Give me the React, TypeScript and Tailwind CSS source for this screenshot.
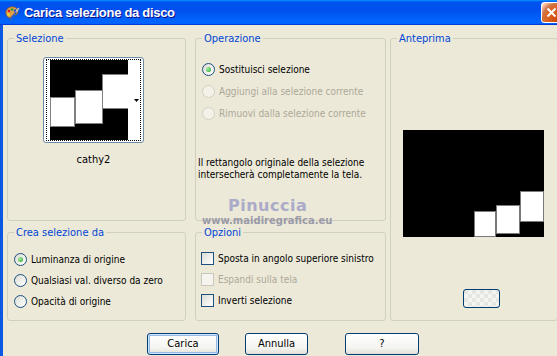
import React from "react";

const font = "font-['DejaVu_Sans_Condensed','Liberation_Sans',sans-serif]";

const Radio = ({
  label,
  checked = false,
  disabled = false,
  h = "h-[21px]",
}: {
  label: string;
  checked?: boolean;
  disabled?: boolean;
  h?: string;
}) => (
  <div className={`flex items-center whitespace-nowrap ${h}`}>
    <span
      className={`flex h-[13px] w-[13px] shrink-0 items-center justify-center rounded-full border ${
        disabled
          ? "border-[#D3D0C2] bg-[#F3F1E8]"
          : "border-[#1C5180] bg-[linear-gradient(135deg,#DCDCD5,#FFFFFF)]"
      }`}
    >
      {checked && (
        <span className="h-[5px] w-[5px] rounded-full bg-[radial-gradient(circle_at_35%_35%,#A8F0A8,#21A121)]" />
      )}
    </span>
    <span className={`ml-[4px] ${disabled ? "text-[#ACA899]" : "text-black"}`}>
      {label}
    </span>
  </div>
);

const Check = ({ label, disabled = false }: { label: string; disabled?: boolean }) => (
  <div className="flex h-[21px] items-center whitespace-nowrap">
    <span
      className={`h-[13px] w-[13px] shrink-0 border ${
        disabled
          ? "border-[#CAC8BB] bg-[#F5F4EE]"
          : "border-[#1C5180] bg-[linear-gradient(135deg,#DCDCD7,#FFFFFF)]"
      }`}
    />
    <span className={`ml-[4px] ${disabled ? "text-[#ACA899]" : "text-black"}`}>
      {label}
    </span>
  </div>
);

const Group = ({
  title,
  className,
  children,
}: {
  title: string;
  className: string;
  children?: React.ReactNode;
}) => (
  <fieldset className={`m-0 min-w-0 rounded-[3px] border border-[#D0D0BF] p-0 ${className}`}>
    <legend className="ml-[6px] px-[2px] text-[11px] leading-[13px] text-[#0046D5]">{title}</legend>
    {children}
  </fieldset>
);

const XpButton = ({
  label,
  w,
  isDefault = false,
}: {
  label: string;
  w: string;
  isDefault?: boolean;
}) => (
  <button
    className={`flex h-[22px] ${w} items-center justify-center rounded-[3px] border border-[#003C74] bg-[linear-gradient(180deg,#FFFFFF,#F4F4F0_70%,#E3E0D6)] text-[11px] text-black ${
      isDefault ? "shadow-[inset_0_0_0_1px_#CEE7FF,inset_0_0_0_2px_#98B8EA]" : ""
    }`}
  >
    {label}
  </button>
);

const Thumb = () => (
  <svg width="78" height="80" viewBox="0 0 78 80">
    <rect width="78" height="80" fill="#000" />
    <rect x="0.5" y="37.5" width="24" height="29" fill="#fff" stroke="#808080" />
    <rect x="25.5" y="30.5" width="27" height="33" fill="#fff" stroke="#808080" />
    <rect x="52.5" y="14.5" width="26" height="34" fill="#fff" stroke="#808080" />
  </svg>
);

const Preview = () => (
  <svg width="141" height="107" viewBox="0 0 141 107">
    <rect width="141" height="107" fill="#000" />
    <rect x="71.5" y="81.5" width="21" height="25" fill="#fff" stroke="#7a7a7a" />
    <rect x="93.5" y="75.5" width="23" height="28" fill="#fff" stroke="#7a7a7a" />
    <rect x="117.5" y="61.5" width="23" height="30" fill="#fff" stroke="#7a7a7a" />
  </svg>
);

const AppIcon = () => (
  <svg width="16" height="16" viewBox="0 0 16 16">
    <path d="M2 9 C1 4 6 1 10 2 C14 3 15 7 13 9 C11 11 9 9 8 11 C7 14 3 13 2 9 Z" fill="#E0A050" stroke="#8A5A20" strokeWidth="0.8" />
    <circle cx="5" cy="6" r="1.3" fill="#E02020" />
    <circle cx="8" cy="4.5" r="1.3" fill="#20A030" />
    <circle cx="11" cy="5.5" r="1.3" fill="#2050E0" />
    <circle cx="4.5" cy="9.5" r="1.2" fill="#F0E020" />
    <path d="M6 15 L13 6" stroke="#3060C0" strokeWidth="2" strokeLinecap="round" />
    <path d="M12.5 6.5 L14.5 3.5" stroke="#C0C0C0" strokeWidth="1.6" strokeLinecap="round" />
  </svg>
);

export default function App() {
  return (
    <div className={`relative h-[356px] w-[557px] overflow-hidden bg-[#ECE9D8] text-[10px] ${font}`}>
      <div className="w-[565px]">
        {/* title bar */}
        <div className="flex h-[25px] items-center bg-[linear-gradient(180deg,#0997FF,#0053EE_8%,#0050EE_40%,#0066FF_88%,#0066FF_93%,#005BFF_95%,#003DD7_96%,#003DD7)] pl-[4px] pr-[3px]">
          <AppIcon />
          <span className="ml-[4px] font-['Liberation_Sans',sans-serif] text-[13px] font-bold tracking-[-0.3px] text-white [text-shadow:1px_1px_#0F1089]">
            Carica selezione da disco
          </span>
          <span className="ml-auto flex h-[21px] w-[21px] items-center justify-center rounded-[3px] border border-white bg-[radial-gradient(circle_at_90%_90%,#CC4600_0%,#DC6527_55%,#CD7546_70%,#FFCCB2_90%,#FFFFFF_100%)]">
            <svg width="11" height="11" viewBox="0 0 11 11">
              <path d="M1.5 1.5 L9.5 9.5 M9.5 1.5 L1.5 9.5" stroke="#fff" strokeWidth="2" />
            </svg>
          </span>
        </div>

        {/* body */}
        <div className="h-[331px] border-l-[3px] border-[#0B58E2] pl-[4px] pt-[7px]">
          <div className="flex">
            <div className="flex flex-col gap-[5px]">
              <Group title="Selezione" className="h-[189px] w-[179px]">
                <div className="ml-[35px] mt-[12px] flex w-[101px] flex-col items-center">
                  <div className="h-[86px] w-[101px] rounded-[3px] border border-[#6D8AA8] bg-white px-[2px] py-[1px]">
                    <div className="flex h-full border border-dotted border-black pl-[3px]">
                      <Thumb />
                      <div className="flex flex-1 items-center justify-end pr-[1px]">
                        <svg width="5" height="3" viewBox="0 0 5 3">
                          <path d="M0 0 H5 L2.5 3 Z" fill="#000" />
                        </svg>
                      </div>
                    </div>
                  </div>
                  <div className="mt-[10px] text-[11px] leading-[13px] text-black">cathy2</div>
                </div>
              </Group>
              <Group title="Crea selezione da" className="h-[95px] w-[179px]">
                <div className="mt-[10px] pl-[6px]">
                  <Radio label="Luminanza di origine" checked />
                  <Radio label="Qualsiasi val. diverso da zero" />
                  <Radio label="Opacità di origine" />
                </div>
              </Group>
            </div>

            <div className="ml-[9px] flex flex-col gap-[5px]">
              <Group title="Operazione" className="h-[189px] w-[191px]">
                <div className="mt-[13px] pl-[6px]">
                  <Radio label="Sostituisci selezione" checked h="h-[22px]" />
                  <Radio label="Aggiungi alla selezione corrente" disabled h="h-[22px]" />
                  <Radio label="Rimuovi dalla selezione corrente" disabled h="h-[22px]" />
                </div>
                <p className="mt-[33px] pl-[2px] leading-[12px] text-black">
                  Il rettangolo originale della selezione
                  <br />
                  intersecherà completamente la tela.
                </p>
              </Group>
              <Group title="Opzioni" className="h-[95px] w-[191px]">
                <div className="mt-[9px] pl-[5px]">
                  <Check label="Sposta in angolo superiore sinistro" />
                  <Check label="Espandi sulla tela" disabled />
                  <Check label="Inverti selezione" />
                </div>
              </Group>
            </div>

            <Group title="Anteprima" className="ml-[4px] h-[289px] w-[168px]">
              <div className="ml-[12px] mt-[85px]">
                <Preview />
              </div>
              <div className="ml-[72px] mt-[52px] h-[19px] w-[37px] rounded-[3px] border border-[#003C74] bg-[repeating-conic-gradient(#F4F4F0_0%_25%,#E6E6E0_0%_50%)] bg-[length:8px_8px]" />
            </Group>
          </div>

          <div className="mt-[12px] flex pl-[140px]">
            <XpButton label="Carica" w="w-[72px]" isDefault />
            <div className="ml-[26px]">
              <XpButton label="Annulla" w="w-[63px]" />
            </div>
            <div className="ml-[37px]">
              <XpButton label="?" w="w-[74px]" />
            </div>
          </div>
        </div>
      </div>

      {/* watermark */}
      <div className="pointer-events-none absolute left-[228px] top-[197px] font-['DejaVu_Sans',sans-serif] text-[16px] font-bold leading-[18px] tracking-[0.5px] text-[#ABABC9]">
        Pinuccia
      </div>
      <div className="pointer-events-none absolute left-[202px] top-[215px] font-['DejaVu_Sans',sans-serif] text-[10px] font-bold leading-[11px] text-[#9A9AA8]">
        www.maidiregrafica.eu
      </div>
    </div>
  );
}
